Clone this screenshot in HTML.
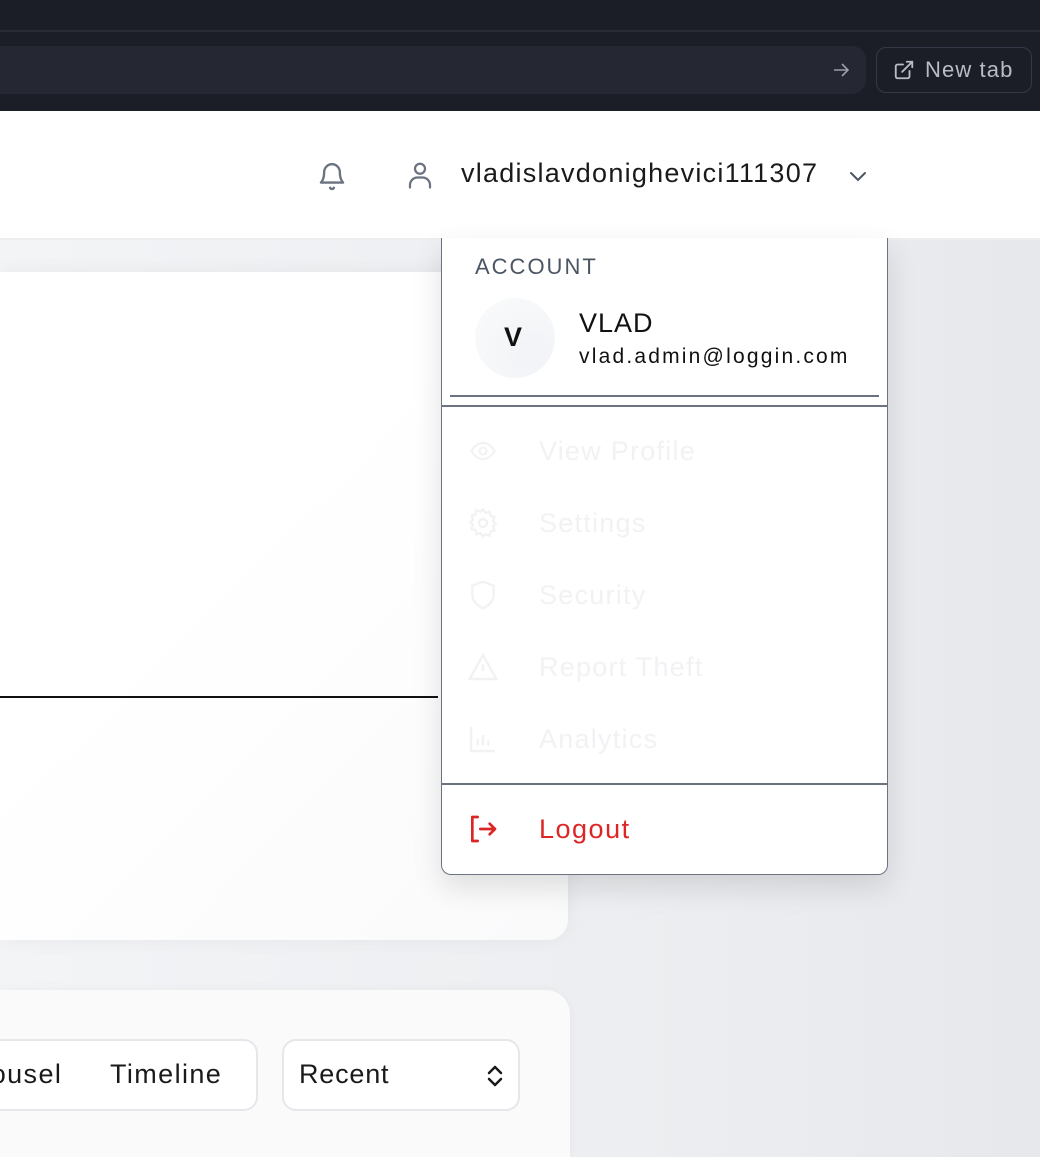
<!DOCTYPE html>
<html><head><meta charset="utf-8"><style>
*{margin:0;padding:0;box-sizing:border-box}
html,body{width:1040px;height:1157px;overflow:hidden}
body{position:relative;font-family:"Liberation Sans",sans-serif;background:linear-gradient(90deg,#f3f4f6 0%,#eceef1 60%,#e6e8ec 100%)}
.abs{position:absolute}
.top{left:0;top:0;width:1040px;height:111px;background:#1b1e27}
.top .l{left:0;top:30px;width:1040px;height:2px;background:#282b36}
.url{left:0;top:46px;width:866px;height:48px;background:#252833;border-radius:0 14px 14px 0}
.nt{left:876px;top:47px;width:156px;height:46px;border:1.5px solid #353947;border-radius:10px;color:#b8bcc6;font-size:22px;line-height:43px;padding-left:48px;letter-spacing:1.1px}
.hdr{left:0;top:111px;width:1040px;height:129px;background:#fff;border-bottom:2px solid #eceef0}
.user{left:461px;top:158px;font-size:27px;color:#1a1a1a;letter-spacing:1.25px}
.card1{left:0;top:272px;width:568px;height:668px;background:linear-gradient(135deg,#fff 40%,#fafafb 100%);border-radius:0 20px 20px 0;box-shadow:0 0 20px rgba(0,0,0,.05)}
.card2{left:0;top:990px;width:570px;height:167px;background:#fafafa;border-radius:0 24px 0 0;box-shadow:0 0 12px rgba(0,0,0,.04)}
.seg{left:0;top:1039px;width:258px;height:72px;border:2px solid #e5e7eb;border-left:none;border-radius:0 14px 14px 0;background:#fff;font-size:27px;color:#1a1a1a;overflow:hidden;letter-spacing:1.4px}
.sel{left:282px;top:1039px;width:238px;height:72px;border:2px solid #e5e7eb;border-radius:14px;background:#fff;font-size:27px;color:#1a1a1a;letter-spacing:0.8px}
.dd{left:441px;top:238px;width:447px;height:637px;background:#fff;border:1.5px solid #6b7280;border-top:none;border-radius:0 0 10px 10px;box-shadow:0 12px 30px rgba(0,0,0,.12)}
.it{left:97px;font-size:27px;color:#f1f2f4;letter-spacing:1.25px}
.ic{left:25px}
</style></head><body>
<div class="abs top"><div class="abs l"></div>
<div class="abs url"><svg class="abs" style="left:831px;top:14px" width="20" height="20" viewBox="0 0 20 20" fill="none" stroke="#9a9ea8" stroke-width="1.6"><path d="M3 10h14M11 4l6 6-6 6"/></svg></div>
<div class="abs nt"><svg class="abs" style="left:16px;top:11px" width="22" height="22" viewBox="0 0 24 24" fill="none" stroke="#b8bcc6" stroke-width="2" stroke-linecap="round"><path d="M18 13v6a2 2 0 0 1-2 2H5a2 2 0 0 1-2-2V8a2 2 0 0 1 2-2h6M15 3h6v6M10 14L21 3"/></svg>New tab</div>
</div>
<div class="abs hdr"></div>
<svg class="abs" style="left:316px;top:159px" width="32" height="34" viewBox="0 0 24 26" fill="none" stroke="#6b7280" stroke-width="1.8" stroke-linecap="round" stroke-linejoin="round"><path d="M6 10a6 6 0 0 1 12 0c0 6 2.5 8 2.5 8h-17S6 16 6 10z"/><path d="M10.5 22a1.7 1.7 0 0 0 3 0"/></svg>
<svg class="abs" style="left:405px;top:160px" width="30" height="30" viewBox="0 0 24 24" fill="none" stroke="#6b7280" stroke-width="1.8" stroke-linecap="round"><circle cx="12" cy="7" r="4"/><path d="M4 22v-2a6 6 0 0 1 6-6h4a6 6 0 0 1 6 6v2"/></svg>
<div class="abs user">vladislavdonighevici111307</div>
<svg class="abs" style="left:846px;top:164px" width="24" height="24" viewBox="0 0 24 24" fill="none" stroke="#4b5563" stroke-width="2" stroke-linecap="round"><path d="M5 9l7 7 7-7"/></svg>

<div class="abs card1"></div>
<div class="abs" style="left:0;top:696px;width:438px;height:2px;background:#111"></div>
<div class="abs card2"></div>
<div class="abs seg"><span class="abs" style="left:-57px;top:18px">Carousel</span><span class="abs" style="left:110px;top:18px">Timeline</span></div>
<div class="abs sel"><span class="abs" style="left:15px;top:18px">Recent</span>
<svg class="abs" style="left:199px;top:21px" width="24" height="28" viewBox="0 0 24 28" fill="none" stroke="#1a1a1a" stroke-width="2.5" stroke-linecap="round" stroke-linejoin="round"><path d="M6 11l6-6 6 6M6 17l6 6 6-6"/></svg></div>

<div class="abs dd">
<div class="abs" style="left:33px;top:16px;font-size:22px;color:#4b5563;letter-spacing:2px">ACCOUNT</div>
<div class="abs" style="left:33px;top:60px;width:80px;height:80px;border-radius:50%;background:radial-gradient(circle at 70% 70%,#f1f3f6,#fafbfc)"></div>
<div class="abs" style="left:62px;top:84px;font-size:27px;font-weight:bold;color:#111">V</div>
<div class="abs" style="left:137px;top:70px;font-size:27px;color:#111;letter-spacing:1px">VLAD</div>
<div class="abs" style="left:137px;top:107px;font-size:21px;color:#111;letter-spacing:2.2px">vlad.admin@loggin.com</div>
<div class="abs" style="left:8px;top:157px;width:429px;height:2px;background:#6b7280"></div>
<div class="abs" style="left:0;top:167px;width:445px;height:2px;background:#6b7280"></div>
<svg class="abs ic" style="top:199px" width="32" height="28" viewBox="0 0 24 24" fill="none" stroke="#f1f2f4" stroke-width="1.8"><path d="M2 12s4-7 10-7 10 7 10 7-4 7-10 7S2 12 2 12z"/><circle cx="12" cy="12" r="3"/></svg>
<div class="abs it" style="top:198px">View Profile</div>
<svg class="abs ic" style="top:269px" width="32" height="32" viewBox="0 0 24 24" fill="none" stroke="#f1f2f4" stroke-width="1.8"><circle cx="12" cy="12" r="3"/><path d="M12 2l2 2.5 3-1 .5 3 3 1-1 3 2 2-2 2 1 3-3 1-.5 3-3-1L12 22l-2-2.5-3 1-.5-3-3-1 1-3-2-2 2-2-1-3 3-1 .5-3 3 1z"/></svg>
<div class="abs it" style="top:270px">Settings</div>
<svg class="abs ic" style="top:341px" width="32" height="32" viewBox="0 0 24 24" fill="none" stroke="#f1f2f4" stroke-width="1.8"><path d="M12 2l8 3v7c0 5-4 8-8 10-4-2-8-5-8-10V5z"/></svg>
<div class="abs it" style="top:342px">Security</div>
<svg class="abs ic" style="top:413px" width="32" height="32" viewBox="0 0 24 24" fill="none" stroke="#f1f2f4" stroke-width="1.8"><path d="M12 3L2 21h20z M12 10v5 M12 18v.5"/></svg>
<div class="abs it" style="top:414px">Report Theft</div>
<svg class="abs ic" style="top:485px" width="32" height="32" viewBox="0 0 24 24" fill="none" stroke="#f1f2f4" stroke-width="1.8"><path d="M3 3v18h18M8 17v-5M12 17V9M16 17v-4"/></svg>
<div class="abs it" style="top:486px">Analytics</div>
<div class="abs" style="left:0;top:545px;width:445px;height:2px;background:#6b7280"></div>
<svg class="abs" style="left:25px;top:575px" width="32" height="32" viewBox="0 0 24 24" fill="none" stroke="#dc2626" stroke-width="2" stroke-linecap="round" stroke-linejoin="round"><path d="M8 3H4v18h4M10 12h11M17 8l4 4-4 4"/></svg>
<div class="abs" style="left:97px;top:576px;font-size:27px;color:#dc2626;letter-spacing:1.5px">Logout</div>
</div>
</body></html>
